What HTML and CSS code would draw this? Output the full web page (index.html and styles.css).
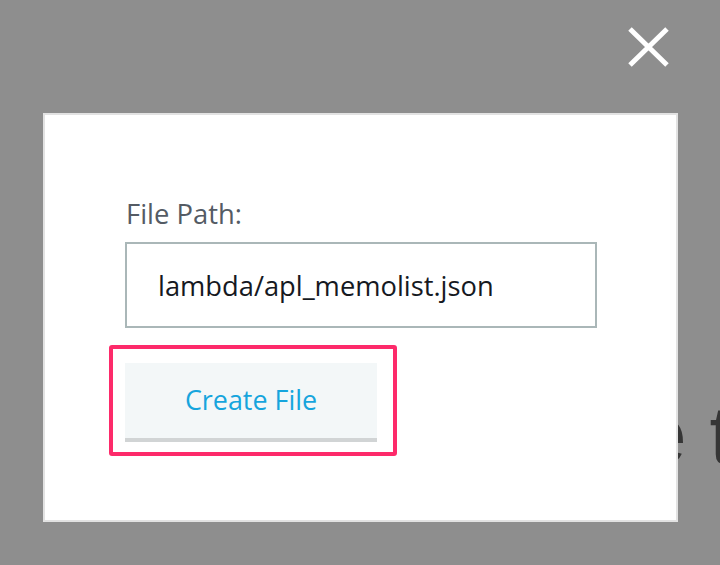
FILE: index.html
```html
<!DOCTYPE html>
<html lang="en">
<head>
<meta charset="utf-8">
<title>Create File</title>
<link rel="stylesheet" href="styles.css">
</head>
<body>
<div class="backdrop-text">e t</div>
<div class="topbar">
  <button class="close" aria-label="Close">
    <svg width="41" height="40" viewBox="0 0 41 40"><path d="M2 2 L39 38 M39 2 L2 38" stroke="#fff" stroke-width="5" fill="none"/></svg>
  </button>
</div>
<div class="modal">
  <div class="label">File Path:</div>
  <div class="input">lambda/apl_memolist.json</div>
  <div class="highlight">
    <div class="btn">Create File</div>
  </div>
</div>
</body>
</html>
```
FILE: styles.css
```css
html, body {
  margin: 0;
  padding: 0;
}
body {
  background: #8e8e8e;
  font-family: "Open Sans", Lato, sans-serif;
  width: 720px;
  height: 565px;
  overflow: hidden;
}
.backdrop-text {
  position: absolute;
  left: 641px;
  top: 394px;
  z-index: -1;
  font-family: "Liberation Sans", Arial, sans-serif;
  font-size: 82px;
  line-height: 82px;
  color: #363636;
  white-space: pre;
}
.topbar {
  display: flex;
  justify-content: flex-end;
  height: 113px;
  box-sizing: border-box;
  padding: 27px 51px 0 0;
}
.close {
  width: 41px;
  height: 40px;
  padding: 0;
  border: 0;
  background: none;
  display: block;
}
.close svg {
  display: block;
}
.modal {
  margin-left: 43px;
  width: 635px;
  height: 409px;
  box-sizing: border-box;
  background: #fff;
  border: 2px solid #e2e2e2;
  padding: 83px 0 0 64px;
}
.label {
  margin-left: 17px;
  font-size: 27.4px;
  line-height: 32px;
  color: #545b64;
}
.input {
  margin: 12px 0 0 16px;
  width: 472px;
  height: 86px;
  box-sizing: border-box;
  border: 2px solid #aab7b8;
  padding: 0 0 0 31px;
  display: flex;
  align-items: center;
  font-size: 27.3px;
  color: #16191f;
}
.highlight {
  margin-top: 17px;
  width: 288px;
  height: 111px;
  box-sizing: border-box;
  border: 4px solid #fd2a6a;
  border-radius: 3px;
  padding: 14px 0 0 12px;
}
.btn {
  width: 252px;
  height: 79px;
  box-sizing: border-box;
  background: #f3f7f8;
  border-bottom: 4px solid #d1d4d5;
  padding-bottom: 2px;
  display: flex;
  align-items: center;
  justify-content: center;
  font-size: 26.9px;
  color: #16a5dd;
}
```
